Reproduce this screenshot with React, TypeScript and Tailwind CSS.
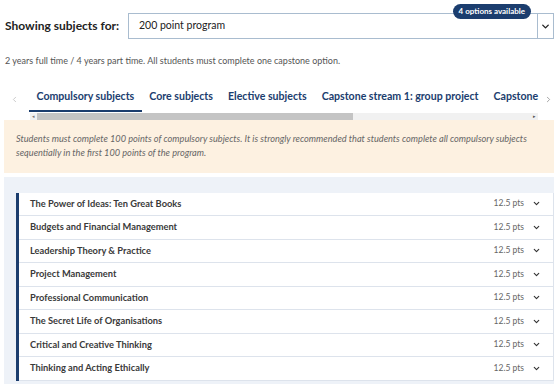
import { ChevronDown, ChevronLeft, ChevronRight } from 'lucide-react';

const TABS = ['Compulsory subjects', 'Core subjects', 'Elective subjects', 'Capstone stream 1: group project', 'Capstone'];

const SUBJECTS = [
  'The Power of Ideas: Ten Great Books',
  'Budgets and Financial Management',
  'Leadership Theory & Practice',
  'Project Management',
  'Professional Communication',
  'The Secret Life of Organisations',
  'Critical and Creative Thinking',
  'Thinking and Acting Ethically',
];

export default function App() {
  return (
    <div className="w-[554px] h-[384px] overflow-hidden bg-white text-[#333] font-['Lato','Liberation_Sans',sans-serif]">
      <div className="flex items-center pl-[5px] pt-[13px]">
        <span className="text-[12px] font-bold text-[#222] w-[123px] shrink-0 whitespace-nowrap">Showing subjects for:</span>
        <div className="relative flex-1 h-[26px] border border-[#a9bccf] flex items-center">
          <span className="pl-[10px] text-[10.5px] text-[#222] flex-1">200 point program</span>
          <div className="w-[16px] h-full border-l border-[#a9bccf] flex items-center justify-center">
            <ChevronDown size={11} strokeWidth={3} className="text-[#222]" />
          </div>
          <span className="absolute right-[22px] -top-[10px] h-[15px] px-[6px] rounded-full bg-[#1b3d6e] text-white text-[8px] font-bold leading-[15px] whitespace-nowrap">4 options available</span>
        </div>
      </div>

      <p className="pl-[5px] mt-[15px] text-[9px] text-[#555]">2 years full time / 4 years part time. All students must complete one capstone option.</p>

      <div className="flex items-center mt-[19px] h-[26px]">
        <div className="w-[29px] flex justify-center">
          <ChevronLeft size={9} className="text-[#bbb]" />
        </div>
        <div className="flex-1 overflow-hidden">
          <div className="flex whitespace-nowrap text-[10.6px] font-bold text-[#1b3d6e]">
            {TABS.map((t, i) => (
              <div key={t} className={`px-[7.5px] pb-[6px] pt-[2px] shrink-0 ${i === 0 ? 'border-b-2 border-[#1b3d6e]' : 'border-b-2 border-transparent'}`}>{t}</div>
            ))}
          </div>
        </div>
        <div className="w-[12px] flex justify-center">
          <ChevronRight size={9} className="text-[#888]" />
        </div>
      </div>
      <div className="ml-[30px] mr-[16px] h-[7px] bg-[#f1f1f1] flex items-center">
        <span className="w-[7px] text-[5px] text-[#777] leading-none text-center">◂</span>
        <div className="w-[316px] h-[7px] bg-[#c4c4c4]" />
        <div className="flex-1" />
        <span className="w-[7px] text-[5px] text-[#555] leading-none text-center">▸</span>
      </div>

      <div className="ml-[4px] h-[53px] bg-[#fdf1e1] px-[12px] pt-[12px] text-[9.2px] italic leading-[14px] text-[#666]">
        Students must complete 100 points of compulsory subjects. It is strongly recommended that students complete all compulsory subjects sequentially in the first 100 points of the program.
      </div>

      <div className="ml-[4px] mt-[4px] bg-[#eef2f8] pt-[16px] pl-[12px] pb-[4px] h-[210px]">
        <div className="border-l-[3px] border-[#1b3d6e] border-r border-r-[#dde3ec]">
          {SUBJECTS.map((s) => (
            <div key={s} className="h-[23.5px] bg-white border-b border-[#dde3ec] flex items-center pl-[11px] pr-[12px]">
              <span className="flex-1 text-[9.3px] font-bold text-[#3a3a3a]">{s}</span>
              <span className="text-[8.5px] text-[#666] mr-[8px]">12.5 pts</span>
              <ChevronDown size={9} strokeWidth={3} className="text-[#333]" />
            </div>
          ))}
        </div>
      </div>
    </div>
  );
}
